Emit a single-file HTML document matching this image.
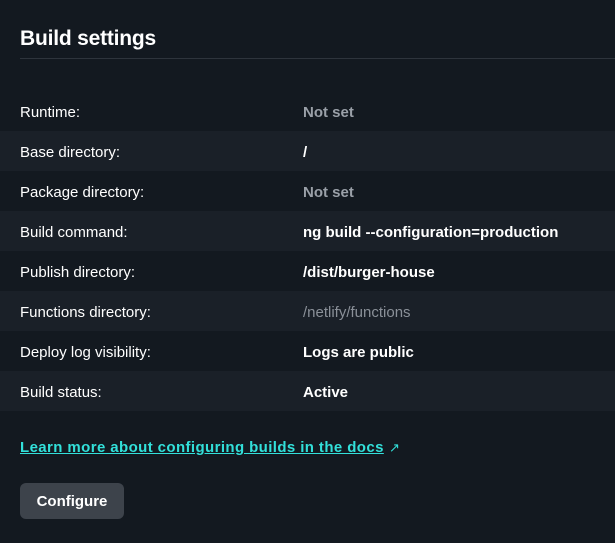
<!DOCTYPE html>
<html><head><style>
html,body{margin:0;padding:0;background:#131920;width:615px;height:543px;overflow:hidden;font-family:"Liberation Sans",sans-serif;color:#fff}
h2{position:absolute;left:20px;top:25px;margin:0;font-size:21px;font-weight:bold;line-height:28px;letter-spacing:-0.2px}
.hr{position:absolute;left:20px;right:0;top:58px;height:1px;background:#2e343c}
.row{position:absolute;left:0;width:615px;height:40px;font-size:15px;line-height:44px}
.row.alt{background:#1a2028}
.k{position:absolute;left:20px}
.v{position:absolute;left:303px;font-weight:bold}
.m{color:#9aa0a8;font-weight:bold}
.p{color:#8a9098;font-weight:normal}
a{position:absolute;left:20px;top:438px;font-size:15px;font-weight:bold;color:#32e0da;text-decoration:underline;line-height:20px;letter-spacing:0.4px}
.ar{position:absolute;left:389px;top:438px;font-size:13px;color:#32e0da;line-height:20px}
.btn{position:absolute;left:20px;top:483px;width:104px;height:36px;background:#3d434b;border-radius:6px;font-size:15px;font-weight:bold;line-height:38px;text-align:center}
</style></head><body>
<h2>Build settings</h2>
<div class="hr"></div>
<div class="row" style="top:91px"><span class="k">Runtime:</span><span class="v m">Not set</span></div>
<div class="row alt" style="top:131px"><span class="k">Base directory:</span><span class="v">/</span></div>
<div class="row" style="top:171px"><span class="k">Package directory:</span><span class="v m">Not set</span></div>
<div class="row alt" style="top:211px"><span class="k">Build command:</span><span class="v">ng build --configuration=production</span></div>
<div class="row" style="top:251px"><span class="k">Publish directory:</span><span class="v">/dist/burger-house</span></div>
<div class="row alt" style="top:291px"><span class="k">Functions directory:</span><span class="v p">/netlify/functions</span></div>
<div class="row" style="top:331px"><span class="k">Deploy log visibility:</span><span class="v">Logs are public</span></div>
<div class="row alt" style="top:371px"><span class="k">Build status:</span><span class="v">Active</span></div>
<a>Learn more about configuring builds in the docs</a><span class="ar">↗</span>
<div class="btn">Configure</div>
</body></html>
